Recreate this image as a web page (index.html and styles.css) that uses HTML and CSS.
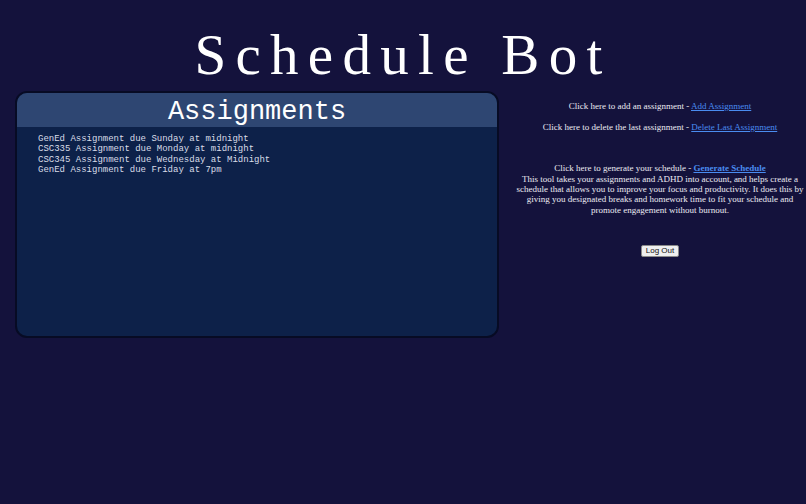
FILE: index.html
```html
<html>
<head><title>Schedule Bot</title>
<link rel="stylesheet" href="styles.css">
</head>
<body>

<h1 class="title">Schedule Bot</h1>

<div class="main">
  <div class="panel">
    <div class="panel-head">Assignments</div>
    <div class="panel-list">
      <div>GenEd Assignment due Sunday at midnight</div>
      <div>CSC335 Assignment due Monday at midnight</div>
      <div>CSC345 Assignment due Wednesday at Midnight</div>
      <div>GenEd Assignment due Friday at 7pm</div>
    </div>
  </div>

  <div class="side">
    <p class="line">Click here to add an assignment - <a href="#">Add Assignment</a></p>
    <p class="line">Click here to delete the last assignment - <a href="#">Delete Last Assignment</a></p>
    <p class="line gen">Click here to generate your schedule - <a href="#"><b>Generate Schedule</b></a><br>
    This tool takes your assignments and ADHD into account, and helps create a schedule that allows you to improve your focus and productivity. It does this by giving you designated breaks and homework time to fit your schedule and promote engagement without burnout.</p>
    <button class="logout">Log Out</button>
  </div>
</div>

</body>
</html>
```

FILE: styles.css
```css
body {
background: #14123c;
color: #ecebf2;
margin: 0;
padding: 0;
font-family: "Liberation Serif", serif;
}

.title {
margin: 0;
padding-top: 23px;
text-align: center;
font-family: "Liberation Serif", serif;
font-weight: normal;
font-size: 57px;
line-height: 63px;
letter-spacing: 9.3px;
color: #ffffff;
}

.main {
display: flex;
gap: 15px;
padding-left: 15px;
margin-top: 5px;
}

.panel {
width: 480px;
height: 243px;
flex: none;
background: #0d2149;
border: 2px solid #070b24;
border-radius: 12px;
overflow: hidden;
}

.panel-head {
height: 34px;
line-height: 38px;
background: #2e4672;
color: #ffffff;
text-align: center;
font-family: "Liberation Mono", monospace;
font-size: 27px;
}

.panel-list {
padding: 7px 21px;
font-family: "Liberation Mono", monospace;
font-size: 9px;
line-height: 10.4px;
color: #d9dde8;
}

.side {
flex: 1;
text-align: center;
font-size: 9px;
line-height: 10.35px;
padding-top: 10px;
}

.line {
margin: 0 0 10.65px 0;
}

.gen {
margin-top: 31px;
margin-bottom: 30px;
}

a {
color: #4a8cf0;
}

.logout {
font-family: "Liberation Sans", sans-serif;
font-size: 8px;
padding: 1px 4px;
height: 12px;
line-height: 8px;
background: #efefef;
color: #111111;
border: 1px solid #8a8a8a;
border-radius: 2px;
}
```
